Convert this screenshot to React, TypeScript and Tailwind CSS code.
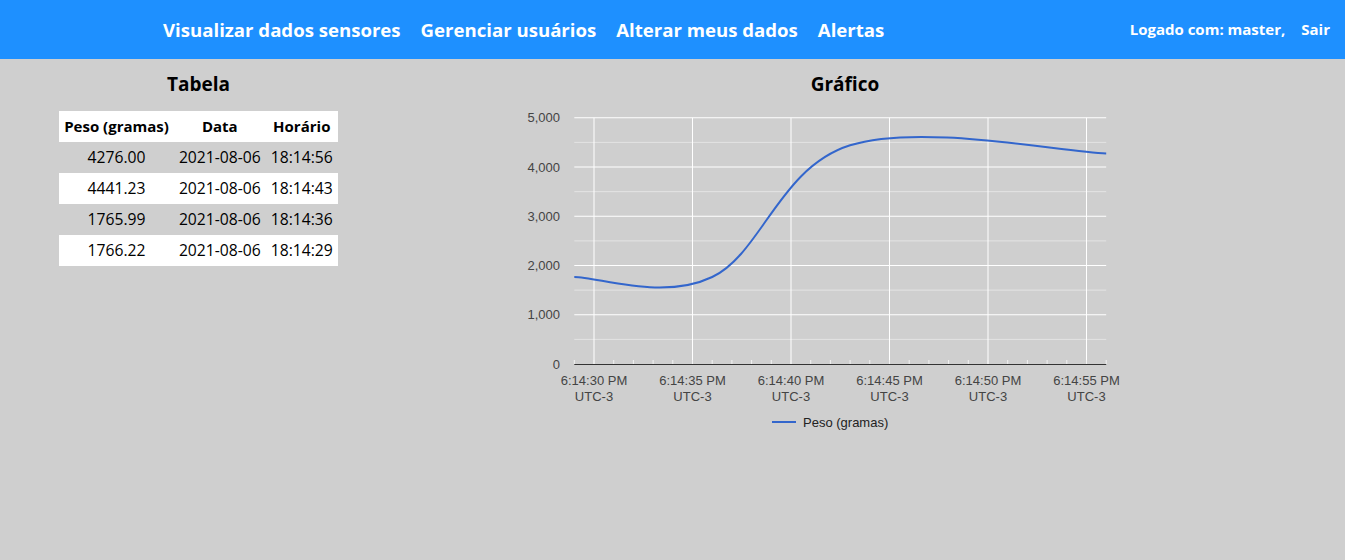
import React from "react";

const rows = [
  { peso: "4276.00", data: "2021-08-06", hora: "18:14:56" },
  { peso: "4441.23", data: "2021-08-06", hora: "18:14:43" },
  { peso: "1765.99", data: "2021-08-06", hora: "18:14:36" },
  { peso: "1766.22", data: "2021-08-06", hora: "18:14:29" },
];

// escalas do gráfico (coordenadas da página, viewBox casa com a posição do svg)
const x = (s: number) => 594 + (s - 30) * 19.7;
const y = (v: number) => 364 - v * 0.04925;
const LEFT = x(29);
const RIGHT = x(56);

const pontos: [number, number][] = [
  [29, 1766.22],
  [36, 1765.99],
  [43, 4441.23],
  [56, 4276.0],
].map(([s, v]) => [x(s), y(v)]);

function curva(p: [number, number][], t = 0.18) {
  let d = `M${p[0][0]},${p[0][1]}`;
  for (let i = 0; i < p.length - 1; i++) {
    const p0 = p[i - 1] ?? p[i];
    const p1 = p[i];
    const p2 = p[i + 1];
    const p3 = p[i + 2] ?? p2;
    const c1 = [p1[0] + (p2[0] - p0[0]) * t, p1[1] + (p2[1] - p0[1]) * t];
    const c2 = [p2[0] - (p3[0] - p1[0]) * t, p2[1] - (p3[1] - p1[1]) * t];
    d += ` C${c1[0]},${c1[1]} ${c2[0]},${c2[1]} ${p2[0]},${p2[1]}`;
  }
  return d;
}

function Grafico() {
  const majors = [30, 35, 40, 45, 50, 55];
  const segundos = Array.from({ length: 28 }, (_, i) => 29 + i);
  return (
    <svg
      width={650}
      height={342}
      viewBox="520 98 650 342"
      className="block"
      style={{ fontFamily: '"Liberation Sans", Arial, sans-serif' }}
    >
      {[500, 1500, 2500, 3500, 4500].map((v) => (
        <line key={v} x1={LEFT} x2={RIGHT} y1={y(v)} y2={y(v)} stroke="#e4e4e4" strokeWidth={1} />
      ))}
      {[1000, 2000, 3000, 4000, 5000].map((v) => (
        <line key={v} x1={LEFT} x2={RIGHT} y1={y(v)} y2={y(v)} stroke="#ffffff" strokeWidth={1} />
      ))}
      {majors.map((s) => (
        <line key={s} x1={x(s)} x2={x(s)} y1={y(5000)} y2={364} stroke="#ffffff" strokeWidth={1} />
      ))}
      {segundos.map((s) => (
        <line key={s} x1={x(s)} x2={x(s)} y1={360} y2={364} stroke="#f2f2f2" strokeWidth={1} />
      ))}
      <line x1={LEFT} x2={RIGHT} y1={364.5} y2={364.5} stroke="#333333" strokeWidth={1} />
      {[0, 1000, 2000, 3000, 4000, 5000].map((v) => (
        <text key={v} x={560} y={y(v) + 4.5} textAnchor="end" fontSize={13} fill="#444444">
          {v.toLocaleString("en-US")}
        </text>
      ))}
      {majors.map((s) => (
        <text key={s} x={x(s)} y={385} textAnchor="middle" fontSize={13} fill="#444444">
          <tspan x={x(s)}>6:14:{s} PM</tspan>
          <tspan x={x(s)} dy={16}>UTC-3</tspan>
        </text>
      ))}
      <path d={curva(pontos)} fill="none" stroke="#3366cc" strokeWidth={2} />
      <line x1={772} x2={796} y1={422} y2={422} stroke="#3366cc" strokeWidth={2} />
      <text x={803} y={426.5} fontSize={13} fill="#222222">
        Peso (gramas)
      </text>
    </svg>
  );
}

export default function App() {
  return (
    <div
      className="min-h-[560px] bg-[#cfcfcf] text-black"
      style={{ fontFamily: '"Open Sans", "Noto Sans", sans-serif' }}
    >
      <header className="flex h-[59px] items-center bg-[#1e90ff] pl-[163px] pr-[15px] font-bold text-white">
        <nav className="flex gap-5 text-[18.6px]">
          <a>Visualizar dados sensores</a>
          <a>Gerenciar usuários</a>
          <a>Alterar meus dados</a>
          <a>Alertas</a>
        </nav>
        <div className="ml-auto flex gap-4 text-[15px]">
          <span>Logado com: master,</span>
          <a>Sair</a>
        </div>
      </header>

      <main className="flex pt-[11px]">
        <section className="flex w-[397px] flex-col items-center">
          <h2 className="text-[19px] font-bold leading-7">Tabela</h2>
          <table className="mt-[13px] whitespace-nowrap text-center text-[15.7px]">
            <thead>
              <tr className="h-[31px] bg-white text-[15px] font-bold">
                <th className="px-[5px]">Peso (gramas)</th>
                <th className="px-[5px]">Data</th>
                <th className="px-[5px]">Horário</th>
              </tr>
            </thead>
            <tbody>
              {rows.map((r, i) => (
                <tr key={r.hora} className={`h-[31px] ${i % 2 === 1 ? "bg-white" : ""}`}>
                  <td className="px-[5px]">{r.peso}</td>
                  <td className="px-[5px]">{r.data}</td>
                  <td className="px-[5px]">{r.hora}</td>
                </tr>
              ))}
            </tbody>
          </table>
        </section>
        <section className="flex w-[896px] flex-col items-center">
          <h2 className="text-[19px] font-bold leading-7">Gráfico</h2>
          <Grafico />
        </section>
      </main>
    </div>
  );
}
